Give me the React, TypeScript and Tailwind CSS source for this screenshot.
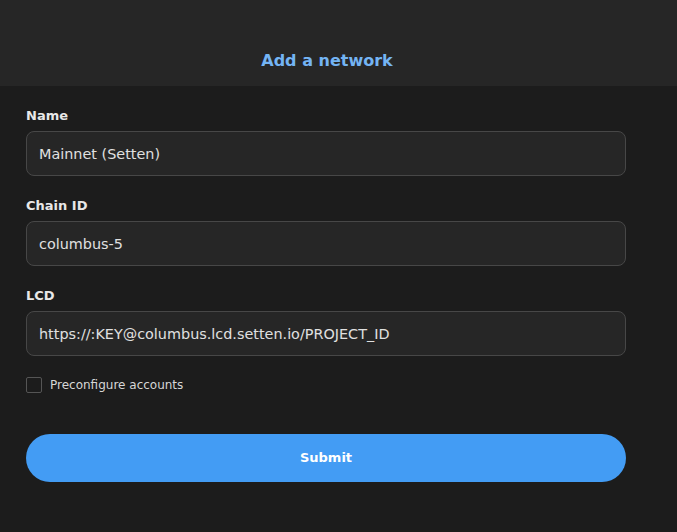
import React, { useState } from 'react';

const fields = [
  { label: 'Name', value: 'Mainnet (Setten)' },
  { label: 'Chain ID', value: 'columbus-5' },
  { label: 'LCD', value: 'https://:KEY@columbus.lcd.setten.io/PROJECT_ID' },
];

const App: React.FC = () => {
  const [checked, setChecked] = useState(false);

  return (
    <div className="min-h-screen bg-[#1c1c1c] font-['DejaVu_Sans',sans-serif] text-[#e6e6e6]">
      {/* Header */}
      <div className="h-[86px] bg-[#262626] flex items-end justify-center pb-[13px] pr-[23px]">
        <h1 className="text-[16px] leading-[24px] font-bold text-[#74b4f4]">Add a network</h1>
      </div>

      {/* Form */}
      <div className="px-[26px] pt-[21px] w-[652px]">
        {fields.map((f) => (
          <div key={f.label} className="mb-[21px]">
            <label className="block text-[13px] leading-[18px] font-bold text-[#e8e8e8] mb-[6px]">{f.label}</label>
            <input
              defaultValue={f.value}
              className="w-full h-[45px] rounded-[8px] border border-[#474747] bg-[#262626] px-[12px] text-[14.4px] text-[#e0e0e0] outline-none"
            />
          </div>
        ))}

        <label className="flex items-center gap-[8px] h-[16px] cursor-pointer">
          <span
            onClick={() => setChecked(!checked)}
            className="w-[16px] h-[16px] rounded-[2px] border border-[#555] bg-[#1c1c1c]"
          />
          <span className="text-[12px] text-[#d6d6d6]">Preconfigure accounts</span>
        </label>

        <button className="mt-[41px] w-full h-[48px] rounded-full bg-[#439cf4] text-white text-[13px] font-bold">
          Submit
        </button>
      </div>
    </div>
  );
};

export default App;
